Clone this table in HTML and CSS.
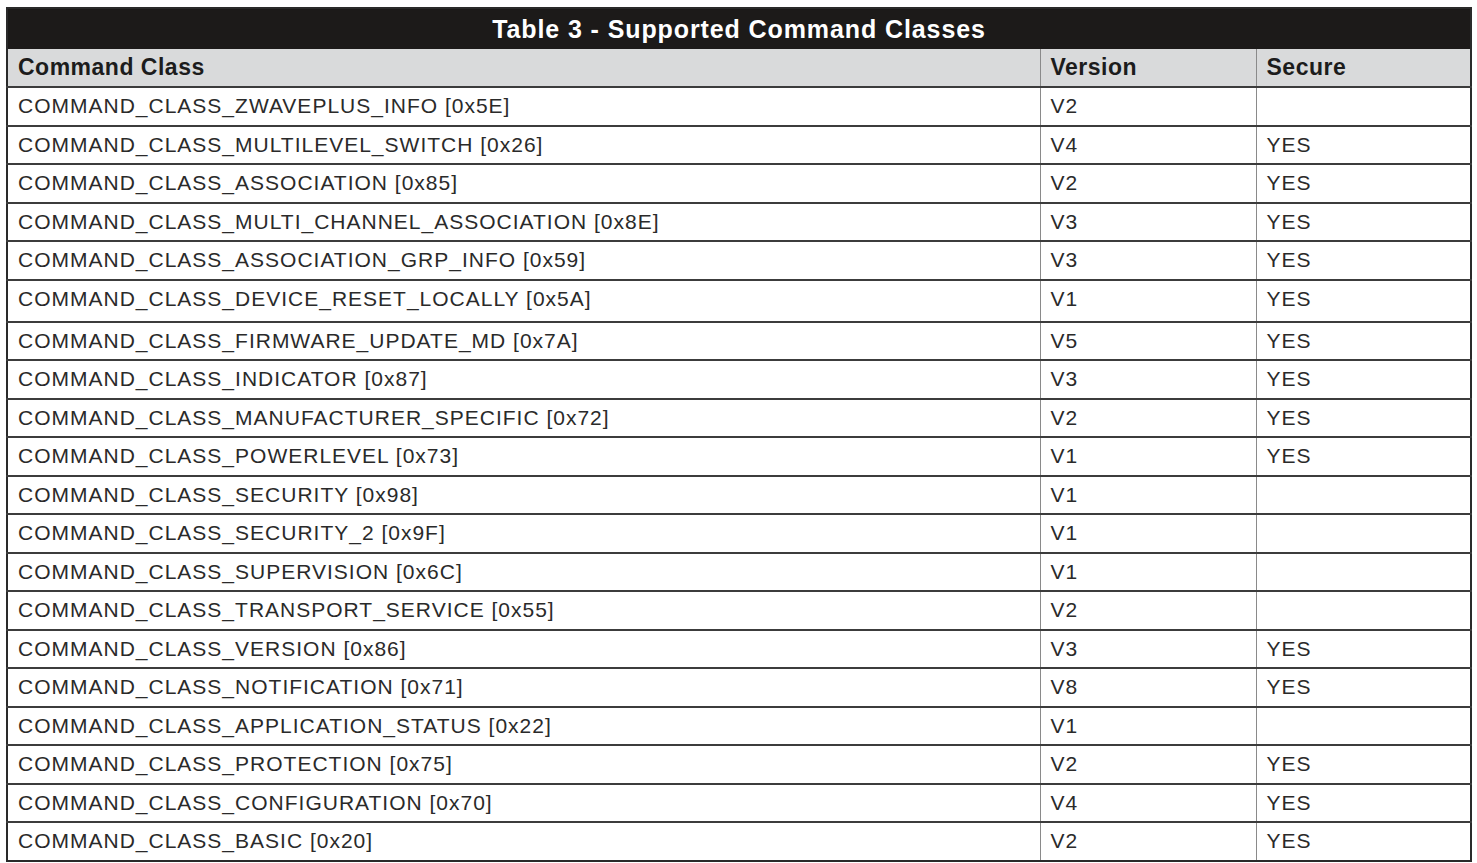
FILE: index.html
```html
<!DOCTYPE html>
<html>
<head>
<meta charset="utf-8">
<link rel="stylesheet" href="styles.css">
</head>
<body>
<table class="cc">
  <colgroup><col class="c1"><col class="c2"><col class="c3"></colgroup>
  <thead>
    <tr class="title"><th colspan="3">Table 3 - Supported Command Classes</th></tr>
    <tr class="head"><th>Command Class</th><th>Version</th><th>Secure</th></tr>
  </thead>
  <tbody>
    <tr><td>COMMAND_CLASS_ZWAVEPLUS_INFO [0x5E]</td><td>V2</td><td></td></tr>
    <tr><td>COMMAND_CLASS_MULTILEVEL_SWITCH [0x26]</td><td>V4</td><td>YES</td></tr>
    <tr><td>COMMAND_CLASS_ASSOCIATION [0x85]</td><td>V2</td><td>YES</td></tr>
    <tr><td>COMMAND_CLASS_MULTI_CHANNEL_ASSOCIATION [0x8E]</td><td>V3</td><td>YES</td></tr>
    <tr><td>COMMAND_CLASS_ASSOCIATION_GRP_INFO [0x59]</td><td>V3</td><td>YES</td></tr>
    <tr class="tall"><td>COMMAND_CLASS_DEVICE_RESET_LOCALLY [0x5A]</td><td>V1</td><td>YES</td></tr>
    <tr><td>COMMAND_CLASS_FIRMWARE_UPDATE_MD [0x7A]</td><td>V5</td><td>YES</td></tr>
    <tr><td>COMMAND_CLASS_INDICATOR [0x87]</td><td>V3</td><td>YES</td></tr>
    <tr><td>COMMAND_CLASS_MANUFACTURER_SPECIFIC [0x72]</td><td>V2</td><td>YES</td></tr>
    <tr><td>COMMAND_CLASS_POWERLEVEL [0x73]</td><td>V1</td><td>YES</td></tr>
    <tr><td>COMMAND_CLASS_SECURITY [0x98]</td><td>V1</td><td></td></tr>
    <tr><td>COMMAND_CLASS_SECURITY_2 [0x9F]</td><td>V1</td><td></td></tr>
    <tr><td>COMMAND_CLASS_SUPERVISION [0x6C]</td><td>V1</td><td></td></tr>
    <tr><td>COMMAND_CLASS_TRANSPORT_SERVICE [0x55]</td><td>V2</td><td></td></tr>
    <tr><td>COMMAND_CLASS_VERSION [0x86]</td><td>V3</td><td>YES</td></tr>
    <tr><td>COMMAND_CLASS_NOTIFICATION [0x71]</td><td>V8</td><td>YES</td></tr>
    <tr><td>COMMAND_CLASS_APPLICATION_STATUS [0x22]</td><td>V1</td><td></td></tr>
    <tr><td>COMMAND_CLASS_PROTECTION [0x75]</td><td>V2</td><td>YES</td></tr>
    <tr><td>COMMAND_CLASS_CONFIGURATION [0x70]</td><td>V4</td><td>YES</td></tr>
    <tr><td>COMMAND_CLASS_BASIC [0x20]</td><td>V2</td><td>YES</td></tr>
  </tbody>
</table>
</body>
</html>
```
FILE: styles.css
```css
html, body {
  margin: 0;
  padding: 0;
  background: #ffffff;
}
body {
  padding: 7px 0 0 6px;
  font-family: "Liberation Sans", Arial, sans-serif;
  color: #1e1e1e;
}
.cc {
  width: 1466px;
  border-collapse: collapse;
  table-layout: fixed;
  border: 2px solid #2a2a2a;
}
.c1 { width: 1033px; }
.c2 { width: 216px; }
.c3 { width: auto; }
.cc th, .cc td {
  text-align: left;
  padding: 0 0 0 10px;
  border: 1px solid #8a8a8a;
  border-top: 2px solid #3c3c3c;
  white-space: nowrap;
  overflow: hidden;
}
.title th {
  background: #1c1a19;
  color: #ffffff;
  text-align: center;
  font-size: 25px;
  font-weight: bold;
  letter-spacing: 0.9px;
  height: 40px;
  padding: 0;
  border: none;
}
.head th {
  background: #d9dadb;
  color: #1c1c1c;
  font-size: 23px;
  font-weight: bold;
  letter-spacing: 0.5px;
  height: 37px;
  border-top: none;
}
.cc td {
  font-size: 21px;
  letter-spacing: 1px;
  height: 36.5px;
  font-weight: normal;
  color: #2a2a2a;
}
.cc tr.tall td {
  height: 37px;
  padding-bottom: 3px;
}
```
